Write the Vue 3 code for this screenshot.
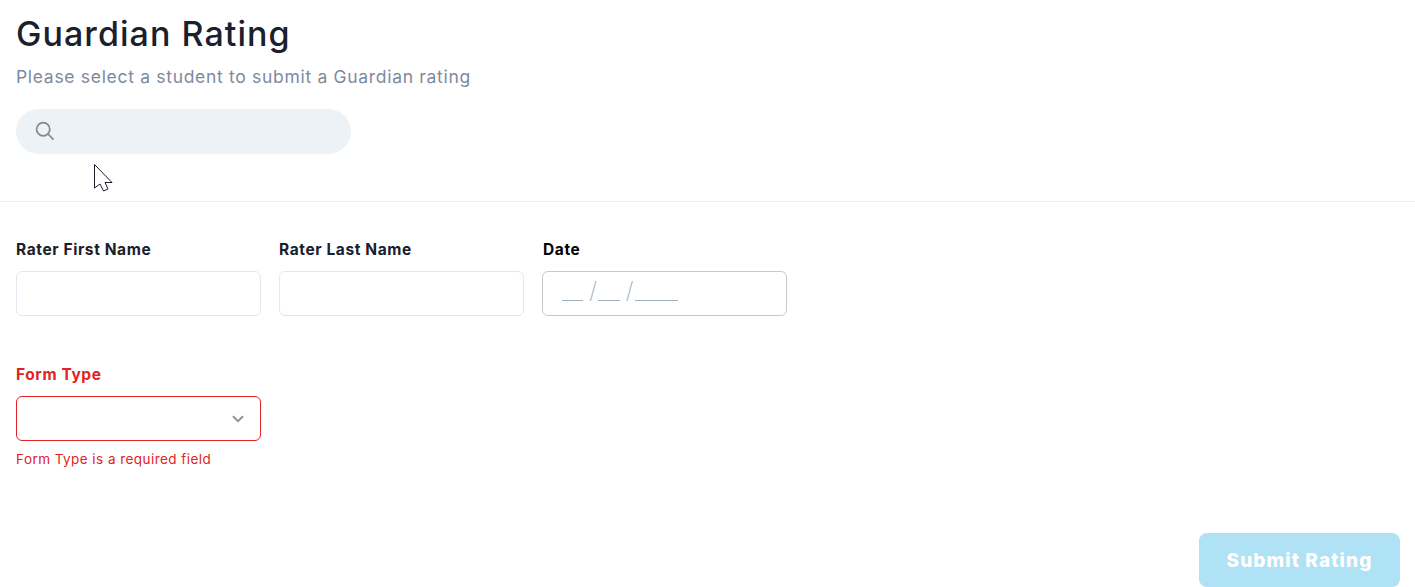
<template>
	<div class="page">
		<header class="head">
			<h1 class="title">Guardian Rating</h1>
			<p class="subtitle">Please select a student to submit a Guardian rating</p>
			<div class="search">
				<svg class="search-icon" width="20" height="20" viewBox="0 0 20 20" fill="none">
					<circle cx="8.2" cy="8.2" r="6.6" />
					<path d="M13 13l5.6 5.6" />
				</svg>
				<input class="search-input" type="text" />
			</div>
		</header>

		<form class="form" @submit.prevent>
			<div class="row">
				<div class="field">
					<label class="label">Rater First Name</label>
					<input class="control" type="text" />
				</div>
				<div class="field">
					<label class="label">Rater Last Name</label>
					<input class="control" type="text" />
				</div>
				<div class="field">
					<label class="label date-label">Date</label>
					<div class="control date">
						<span class="blank w2"></span><span class="slash">/</span><span class="blank w2"></span><span class="slash">/</span><span class="blank w4"></span>
					</div>
				</div>
			</div>

			<div class="row type-row">
				<div class="field">
					<label class="label error">Form Type</label>
					<div class="control select">
						<svg width="12" height="8" viewBox="0 0 12 8" fill="none">
							<path d="M1 1.2l5 5 5-5" />
						</svg>
					</div>
					<span class="error-text">Form Type is a required field</span>
				</div>
			</div>

			<div class="actions">
				<button class="submit" type="button" disabled>Submit Rating</button>
			</div>
		</form>

		<svg class="cursor" width="20" height="28" viewBox="0 0 20 28">
			<path d="M.5.5V24L6 20l3.5 7 4.5-2-3-6.5h7z" fill="#fff" stroke="#1a1f2b" stroke-width="1" />
		</svg>
	</div>
</template>

<script setup>
</script>

<style>
html,
body {
	background: #fff;
	overflow: hidden;
}
</style>

<style scoped>
.page {
	position: relative;
	height: 587px;
	font-family: Inter, "Noto Sans", sans-serif;
	color: #1a202c;
}

.head {
	height: 201px;
	padding: 0 16px;
	border-bottom: 1px solid #edf0f3;
	overflow: hidden;
}

.title {
	margin: 13px 0 0;
	font-size: 34px;
	line-height: 42px;
	font-weight: 500;
	letter-spacing: 1.05px;
}

.subtitle {
	margin: 9px 0 0;
	font-size: 17.5px;
	line-height: 26px;
	font-weight: 400;
	letter-spacing: 0.69px;
	color: #7c8a9e;
}

.search {
	display: flex;
	align-items: center;
	width: 335px;
	height: 45px;
	margin-top: 19px;
	padding-left: 19px;
	box-sizing: border-box;
	background: #edf2f7;
	border-radius: 23px;
}

.search-icon {
	flex: none;
	margin-top: -1px;
}

.search-icon circle,
.search-icon path {
	stroke: #7b8a97;
	stroke-width: 1.7;
}

.search-input {
	flex: 1;
	min-width: 0;
	border: 0;
	background: none;
	outline: none;
}

.form {
	padding: 0 15px 0 16px;
}

.row {
	display: flex;
	gap: 18px;
	padding-top: 37px;
}

.type-row {
	padding-top: 48px;
}

.field {
	display: flex;
	flex-direction: column;
	width: 245px;
}

.label {
	font-size: 15.5px;
	line-height: 22px;
	font-weight: 700;
	letter-spacing: 0.6px;
	margin-bottom: 10px;
}

.date-label {
	padding-left: 1px;
	color: #000;
}

.error {
	color: #e02424;
}

.control {
	width: 100%;
	height: 45px;
	box-sizing: border-box;
	border: 1px solid #e2e8f0;
	border-radius: 6px;
	background: #fff;
	outline: none;
}

.date {
	display: flex;
	align-items: flex-end;
	padding: 0 0 14px 18.5px;
	border-color: #c6c8cc;
}

.blank {
	height: 1px;
	background: #a0aec0;
}

.w2 {
	width: 21.5px;
}

.w4 {
	width: 43px;
}

.slash {
	width: 15px;
	padding-right: 1px;
	box-sizing: border-box;
	text-align: right;
	font-size: 23px;
	line-height: 19px;
	font-weight: 200;
	color: #a0aec0;
}

.select {
	display: flex;
	align-items: center;
	justify-content: flex-end;
	padding-right: 16px;
	border-color: #e02424;
}

.select path {
	stroke: #8f9299;
	stroke-width: 2;
}

.error-text {
	margin-top: 8px;
	font-size: 13.5px;
	line-height: 20px;
	letter-spacing: 0.45px;
	color: #e02424;
}

.actions {
	display: flex;
	justify-content: flex-end;
	margin-top: 64px;
}

.submit {
	width: 201px;
	height: 54px;
	border: 0;
	border-radius: 8px;
	background: #b0e2f6;
	color: #fff;
	font-family: inherit;
	font-size: 19px;
	font-weight: 800;
	letter-spacing: 1.1px;
}

.cursor {
	position: absolute;
	left: 94px;
	top: 164px;
}
</style>
